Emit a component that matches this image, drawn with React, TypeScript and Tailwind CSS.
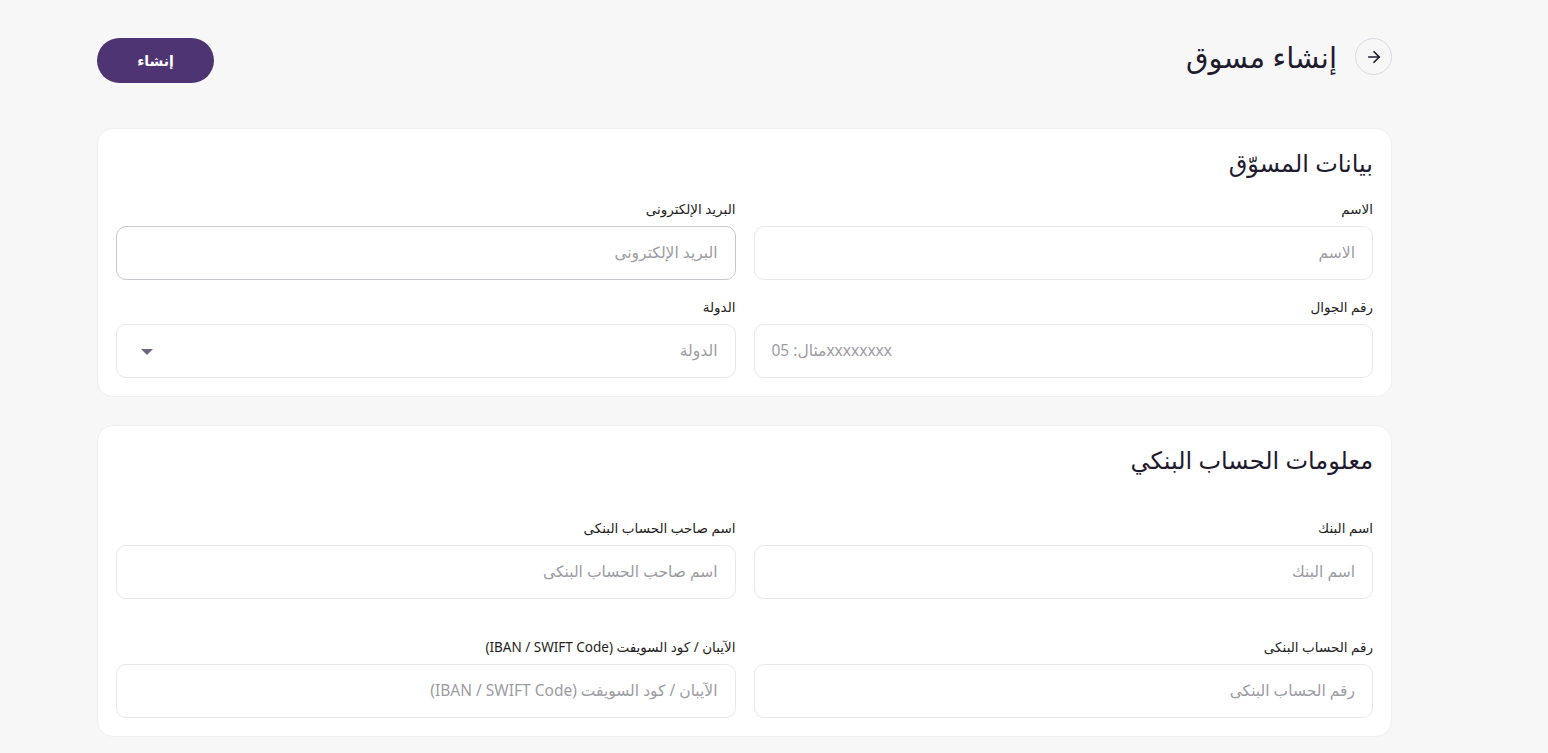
import type { ReactNode } from 'react'
import { ArrowRight } from 'lucide-react'

const font = { fontFamily: '"Noto Sans", "DejaVu Sans", sans-serif' }

type FieldProps = {
  label: string
  placeholder: ReactNode
  focused?: boolean
  select?: boolean
  ltr?: boolean
}

function Field({ label, placeholder, focused, select, ltr }: FieldProps) {
  return (
    <div className="flex flex-col">
      <label className="mb-[8px] text-[13.5px] leading-[18px] text-[#1f1f24]">{label}</label>
      <div
        dir={ltr ? 'ltr' : undefined}
        className={
          'relative flex h-[54px] items-center rounded-[10px] border bg-white px-[17px] ' +
          (focused ? 'border-[#c8c6d0]' : 'border-[#e8e8ec]')
        }
      >
        <span className="text-[15.5px] text-[#9c9ca3]">{placeholder}</span>
        {select ? (
          <span className="absolute left-[24px] top-[24px] h-0 w-0 border-x-[6px] border-t-[6px] border-x-transparent border-t-[#6e6583]" />
        ) : null}
      </div>
    </div>
  )
}

export default function App() {
  return (
    <div dir="rtl" style={font} className="min-h-screen bg-[#f7f7f7] pl-[97px] pr-[156px] pt-[38px] pb-[16px]">
      <div className="flex items-start justify-between">
        <div className="flex items-center gap-[18px]">
          <button className="flex h-[37px] w-[37px] items-center justify-center rounded-full border border-[#dcd9e3] bg-transparent">
            <ArrowRight size={18} strokeWidth={2.25} className="text-[#1f1a2e]" />
          </button>
          <h1 className="text-[29px] leading-[36px] text-[#1f1a2e]">إنشاء مسوق</h1>
        </div>
        <button className="h-[45px] w-[117px] rounded-full bg-[#4f3473] text-[14px] font-semibold text-white">
          إنشاء
        </button>
      </div>

      <section className="mt-[45px] rounded-[16px] border border-[#efefef] bg-white px-[18px] pb-[18px] pt-[18px]">
        <h2 className="mb-[21px] text-[24px] leading-[32px] text-[#1f1a2e]">بيانات المسوّق</h2>
        <div className="grid grid-cols-2 gap-x-[18px] gap-y-[18px]">
          <Field label="الاسم" placeholder="الاسم" />
          <Field label="البريد الإلكترونى" placeholder="البريد الإلكترونى" focused />
          <Field
            label="رقم الجوال"
            ltr
            placeholder={
              <span className="flex">
                <span className="whitespace-pre">05 :</span>
                <span>مثال</span>
                <span>xxxxxxxx</span>
              </span>
            }
          />
          <Field label="الدولة" placeholder="الدولة" select />
        </div>
      </section>

      <section className="mt-[28px] rounded-[16px] border border-[#efefef] bg-white px-[18px] pb-[18px] pt-[18px]">
        <h2 className="mb-[43px] text-[24px] leading-[32px] text-[#1f1a2e]">معلومات الحساب البنكي</h2>
        <div className="grid grid-cols-2 gap-x-[18px] gap-y-[39px]">
          <Field label="اسم البنك" placeholder="اسم البنك" />
          <Field label="اسم صاحب الحساب البنكى" placeholder="اسم صاحب الحساب البنكى" />
          <Field label="رقم الحساب البنكى" placeholder="رقم الحساب البنكى" />
          <Field label="الآيبان / كود السويفت (IBAN / SWIFT Code)" placeholder="الآيبان / كود السويفت (IBAN / SWIFT Code)" />
        </div>
      </section>
    </div>
  )
}
